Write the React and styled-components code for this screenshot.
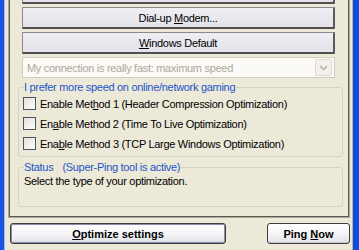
import React from 'react';
import styled, { createGlobalStyle } from 'styled-components';

const GlobalStyle = createGlobalStyle`
  body {
    margin: 0;
    background: #ece9d8;
    font-family: 'Liberation Sans', Arial, sans-serif;
    font-size: 11px;
    letter-spacing: -0.3px;
    overflow: hidden;
  }
`;

const Window = styled.div`
  width: 359px;
  height: 250px;
  box-sizing: border-box;
  display: flex;
  flex-direction: column;
  background: #ece9d8;
  border-left: 4px solid #1a56e0;
  border-right: 6px solid #0f4bd8;
  box-shadow: inset 1px 0 #9cb8f0, inset -1px 0 #b8b6a8;
  padding: 0 3px 0 4px;
  overflow: hidden;
`;

const Panel = styled.div`
  margin-top: -24px;
  height: 242px;
  box-sizing: border-box;
  border: 1px solid #aca899;
  box-shadow: inset 0 0 0 1px #5c5b52;
  padding: 5px 6px 0 9px;
  display: flex;
  flex-direction: column;
`;

const ActionButton = styled.button`
  height: 22px;
  margin: 0 8px 3px 4px;
  padding: 0;
  font: inherit;
  letter-spacing: inherit;
  color: #000;
  background: linear-gradient(#efeef3, #e4e2ea);
  border: 1px solid #8a8a8a;
  border-bottom: 2px solid #4f4f4f;
  border-right: 2px solid #5c5c5c;
  border-radius: 1px;
`;

const Combo = styled.div`
  height: 21px;
  box-sizing: border-box;
  margin: 0 8px 0 4px;
  border: 1px solid #cfcdc0;
  background: #fbfaf6;
  display: flex;
  align-items: center;
  justify-content: space-between;
  padding: 0 2px 0 4px;
  color: #aca899;
`;

const ComboArrow = styled.div`
  width: 15px;
  height: 15px;
  border: 1px solid #dcdad0;
  border-radius: 2px;
  background: #f2f1ec;
  display: flex;
  align-items: center;
  justify-content: center;
`;

const Group = styled.fieldset`
  margin: ${(p) => p.$top}px 0 0;
  padding: 4px 4px ${(p) => p.$bottom}px;
  border: 1px solid #d5d2c3;
  border-radius: 3px;
  display: flex;
  flex-direction: column;
  gap: 7px;
`;

const Legend = styled.legend`
  padding: 0 1px;
  color: #1d55c9;
`;

const Gap = styled.span`
  display: inline-block;
  width: ${(p) => p.$w}px;
`;

const CheckRow = styled.label`
  display: flex;
  align-items: center;
  gap: 4px;
  height: 13px;
`;

const Box = styled.span`
  width: 11px;
  height: 11px;
  border: 1px solid #4a5560;
  background: linear-gradient(135deg, #e4e3dc, #fcfcfb);
`;

const StatusText = styled.div`
  margin-top: -2px;
  padding-left: 1px;
  height: 28px;
`;

const U = styled.span`
  text-decoration: underline;
`;

const BottomBar = styled.div`
  display: flex;
  justify-content: space-between;
  padding: 5px 0 0 2px;
`;

const MainButton = styled.button`
  width: ${(p) => p.$w}px;
  height: 21px;
  padding: 0;
  font: inherit;
  font-weight: bold;
  letter-spacing: 0;
  color: #000;
  border: 1px solid #3d3d3d;
  border-radius: 3px;
  background: linear-gradient(#ffffff, #f3f3f6 60%, #dddde4);
  box-shadow: ${(p) => (p.$default ? 'inset 0 0 0 1px #8d8fa6' : 'inset 0 -1px #c8c8d2')};
`;

export default function App() {
  return (
    <>
      <GlobalStyle />
      <Window>
        <Panel>
          <ActionButton>LAN / DSL</ActionButton>
          <ActionButton>Dial-up <U>M</U>odem...</ActionButton>
          <ActionButton><U>W</U>indows Default</ActionButton>
          <Combo>
            <span>My connection is really fast: maximum speed</span>
            <ComboArrow>
              <svg width="9" height="6" viewBox="0 0 9 6">
                <path d="M1 1l3.5 3.5L8 1" fill="none" stroke="#b9b7ad" strokeWidth="1.6" />
              </svg>
            </ComboArrow>
          </Combo>
          <Group $top={3} $bottom={6}>
            <Legend>I prefer more speed on online/network gaming</Legend>
            <CheckRow><Box /><span>Enable Met<U>h</U>od 1 (Header Compression Optimization)</span></CheckRow>
            <CheckRow><Box /><span>En<U>a</U>ble Method 2 (Time To Live Optimization)</span></CheckRow>
            <CheckRow><Box /><span>Ena<U>b</U>le Method 3 (TCP Large Windows Optimization)</span></CheckRow>
          </Group>
          <Group $top={4} $bottom={3}>
            <Legend>Status<Gap $w={9} />(Super-Ping tool is active)</Legend>
            <StatusText>Select the type of your optimization.</StatusText>
          </Group>
        </Panel>
        <BottomBar>
          <MainButton $w={216} $default><U>O</U>ptimize settings</MainButton>
          <MainButton $w={83}>Ping <U>N</U>ow</MainButton>
        </BottomBar>
      </Window>
    </>
  );
}
